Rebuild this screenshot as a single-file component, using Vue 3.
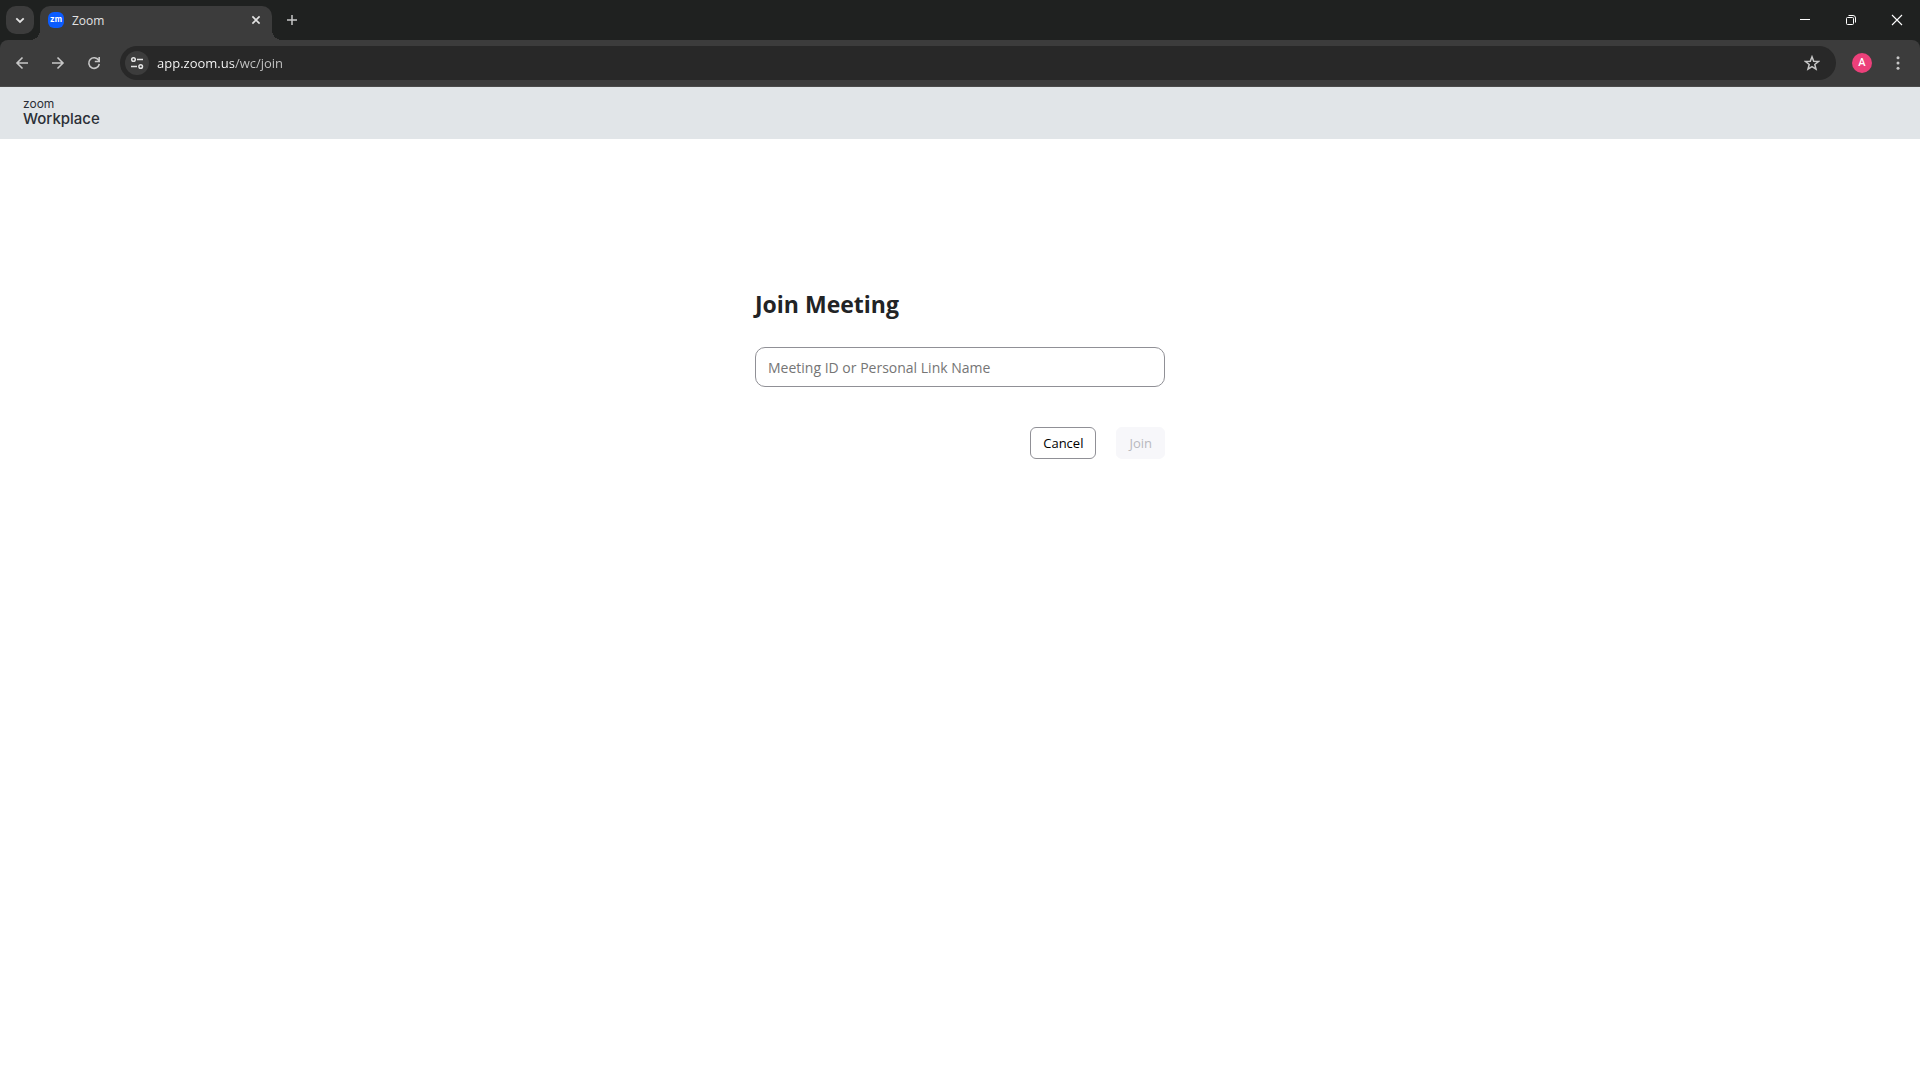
<script setup>
import { ref } from 'vue'

const address = ref('app.zoom.us/wc/join')
const meetingId = ref('')
</script>

<template>
  <div class="browser">
    <header class="chrome">
      <div class="tab-strip">
        <button class="tab-search" type="button" aria-label="Search tabs">
          <svg width="16" height="16" viewBox="0 0 16 16"><path d="M4.3 6.3 8 10l3.700-3.700" fill="none" stroke="#e3e3e3" stroke-width="1.8" /></svg>
        </button>
        <div class="tab">
          <span class="favicon">zm</span>
          <span class="tab-title">Zoom</span>
          <button class="tab-close" type="button" aria-label="Close tab">
            <svg width="16" height="16" viewBox="0 0 16 16"><path d="m4.4 4.4 7.2 7.2m0-7.2-7.2 7.2" stroke="#e3e3e3" stroke-width="1.6" /></svg>
          </button>
        </div>
        <button class="new-tab" type="button" aria-label="New tab">
          <svg width="16" height="16" viewBox="0 0 16 16"><path d="M8 3v10M3 8h10" stroke="#c7c7c7" stroke-width="1.5" /></svg>
        </button>
        <div class="window-controls">
          <button type="button" aria-label="Minimize">
            <svg width="16" height="16" viewBox="0 0 16 16"><path d="M3 7.5h10" stroke="#fff" /></svg>
          </button>
          <button type="button" aria-label="Restore">
            <svg width="16" height="16" viewBox="0 0 16 16" fill="none" stroke="#fff"><rect x="3.5" y="5.5" width="7" height="7" rx="1" /><path d="M5.5 3.5H10A2.5 2.5 0 0 1 12.5 6v4.5" /></svg>
          </button>
          <button type="button" aria-label="Close">
            <svg width="16" height="16" viewBox="0 0 16 16"><path d="m3 3 10 10M13 3 3 13" stroke="#fff" stroke-width="1.1" /></svg>
          </button>
        </div>
      </div>

      <div class="toolbar">
        <nav class="history">
          <button type="button" aria-label="Back">
            <svg width="16" height="16" viewBox="0 0 16 16"><path d="M14 8H3m5.500-5.500L3 8l5.500 5.500" fill="none" stroke="#c7c7c7" stroke-width="1.6" /></svg>
          </button>
          <button type="button" aria-label="Forward">
            <svg width="16" height="16" viewBox="0 0 16 16"><path d="M2 8h11M7.500 2.500 13 8l-5.500 5.500" fill="none" stroke="#c7c7c7" stroke-width="1.6" /></svg>
          </button>
          <button type="button" aria-label="Reload">
            <svg width="16" height="16" viewBox="0 0 16 16"><path d="M13.300 9A5.300 5.300 0 1 1 12.600 5.200L13.200 6.200M13.200 2v4.500H8.800" fill="none" stroke="#c7c7c7" stroke-width="1.6" /></svg>
          </button>
        </nav>
        <div class="omnibox">
          <button class="site-info" type="button" aria-label="View site information">
            <svg width="16" height="16" viewBox="0 0 16 16" fill="none" stroke="#e3e3e3" stroke-width="1.5"><circle cx="4.500" cy="4.500" r="1.800" /><path d="M8 4.500h6M2 11.500h6" /><circle cx="11.700" cy="11.500" r="1.800" /></svg>
          </button>
          <input v-model="address" class="address" type="text" aria-label="Address and search bar" spellcheck="false" />
          <button class="bookmark" type="button" aria-label="Bookmark this tab">
            <svg width="16" height="16" viewBox="0 0 16 16"><path d="m8 1.800 1.700 4.400 4.700.3-3.600 3 1.200 4.600L8 11.600l-4 2.500 1.200-4.600-3.600-3 4.700-.3z" fill="none" stroke="#c7c7c7" stroke-width="1.500" /></svg>
          </button>
        </div>
        <button class="avatar" type="button" aria-label="Profile">A</button>
        <button class="menu" type="button" aria-label="Menu">
          <svg width="16" height="16" viewBox="0 0 16 16" fill="#c7c7c7"><circle cx="8" cy="2.700" r="1.500" /><circle cx="8" cy="8" r="1.500" /><circle cx="8" cy="13.300" r="1.500" /></svg>
        </button>
      </div>
    </header>

    <div class="brand-bar">
      <a class="brand" href="#">
        <span class="brand-name">zoom</span>
        <span class="brand-product">Workplace</span>
      </a>
    </div>

    <main class="page">
      <form class="join" @submit.prevent>
        <h1>Join Meeting</h1>
        <input v-model="meetingId" class="meeting-id" type="text" placeholder="Meeting ID or Personal Link Name" aria-label="Meeting ID or Personal Link Name" />
        <div class="actions">
          <button class="cancel" type="button">Cancel</button>
          <button class="submit" type="submit" :disabled="!meetingId">Join</button>
        </div>
      </form>
    </main>
  </div>
</template>

<style>
body {
  margin: 0;
  background: #fff;
}
</style>

<style scoped>
.browser {
  font-family: "Open Sans", "Noto Sans", sans-serif;
}

.browser * {
  box-sizing: border-box;
}

button {
  display: flex;
  align-items: center;
  justify-content: center;
  padding: 0;
  border: 0;
  background: none;
  font-family: inherit;
}

svg {
  display: block;
}

.chrome {
  background: #1f2120;
}

.tab-strip {
  display: flex;
  height: 40px;
  padding-left: 6px;
}

.tab-search {
  width: 28px;
  height: 28px;
  margin-top: 6px;
  border-radius: 10px;
  background: #3c3c3c;
}

.tab {
  position: relative;
  display: flex;
  align-items: center;
  width: 232px;
  height: 34px;
  margin: 6px 6px 0;
  padding: 0 8px 6px;
  border-radius: 10px 10px 0 0;
  background: #3c3c3c;
}

.tab::before,
.tab::after {
  content: "";
  position: absolute;
  bottom: 0;
  width: 10px;
  height: 10px;
}

.tab::before {
  right: 100%;
  background: radial-gradient(circle at 0 0, transparent 10px, #3c3c3c 10px);
}

.tab::after {
  left: 100%;
  background: radial-gradient(circle at 100% 0, transparent 10px, #3c3c3c 10px);
}

.favicon {
  width: 16px;
  height: 16px;
  border-radius: 6px;
  background: #0b5cff;
  color: #fff;
  font: 700 8px/15px Inter, sans-serif;
  text-align: center;
}

.tab-title {
  flex: 1;
  margin-left: 8px;
  padding-top: 2px;
  color: #e3e3e3;
  font-size: 12px;
  line-height: 16px;
}

.new-tab {
  width: 28px;
  height: 28px;
  margin-top: 6px;
}

.window-controls {
  display: flex;
  margin-left: auto;
}

.window-controls button {
  width: 46px;
  height: 40px;
}

.toolbar {
  display: flex;
  align-items: center;
  height: 47px;
  padding: 0 8px 0 4px;
  border-bottom: 1px solid #4a4a4a;
  border-radius: 8px 8px 0 0;
  background: #3c3c3c;
}

.history {
  display: flex;
}

.history button {
  width: 36px;
  height: 34px;
}

.omnibox {
  display: flex;
  align-items: center;
  flex: 1;
  height: 34px;
  margin-left: 8px;
  padding: 0 16px 0 5px;
  border-radius: 17px;
  background: #282828;
}

.site-info {
  width: 24px;
  height: 24px;
  border-radius: 12px;
  background: #3c3c3c;
}

/* The host is drawn brighter than the path that follows it. */
.address {
  flex: 1;
  margin: 0 8px;
  padding: 0;
  border: 0;
  outline: 0;
  background: linear-gradient(90deg, #fff 78px, #c7c7c7 78px);
  background-clip: text;
  color: transparent;
  font: 13px/20px "Open Sans", "Noto Sans", sans-serif;
}

.avatar {
  width: 20px;
  height: 20px;
  margin-left: 16px;
  border-radius: 10px;
  background: #ec407a;
  color: #fff;
  font: 500 11px/20px Roboto, sans-serif;
}

.menu {
  width: 28px;
  height: 34px;
  margin-left: 12px;
}

.brand-bar {
  display: flex;
  height: 52px;
  padding: 10px 23px;
  background: #e1e5e8;
}

.brand {
  display: flex;
  flex-direction: column;
  color: #2b2f36;
  font-family: Inter, sans-serif;
  text-decoration: none;
}

.brand-name {
  font-size: 12px;
  line-height: 14px;
}

.brand-product {
  font-size: 15px;
  font-weight: 500;
  line-height: 16px;
}

.page {
  padding-top: 149px;
}

.join {
  width: 410px;
  margin: 0 auto;
}

h1 {
  margin: 0;
  color: #222325;
  font-size: 23px;
  font-weight: 700;
  line-height: 32px;
}

.meeting-id {
  display: block;
  width: 100%;
  height: 40px;
  margin-top: 27px;
  padding: 0 12px;
  border: 1px solid #909096;
  border-radius: 10px;
  background: #fff;
  color: #222325;
  font: 14px/20px "Open Sans", "Noto Sans", sans-serif;
}

.meeting-id::placeholder {
  color: #757575;
}

.actions {
  display: flex;
  justify-content: flex-end;
  gap: 20px;
  margin-top: 40px;
}

.actions button {
  height: 32px;
  padding: 0 12px;
  border: 1px solid #909096;
  border-radius: 6px;
  background: #fff;
  color: #000;
  font-size: 13px;
  line-height: 20px;
}

.actions .submit {
  border-color: #f7f7fa;
  background: #f7f7fa;
  color: #b9b9be;
}
</style>
